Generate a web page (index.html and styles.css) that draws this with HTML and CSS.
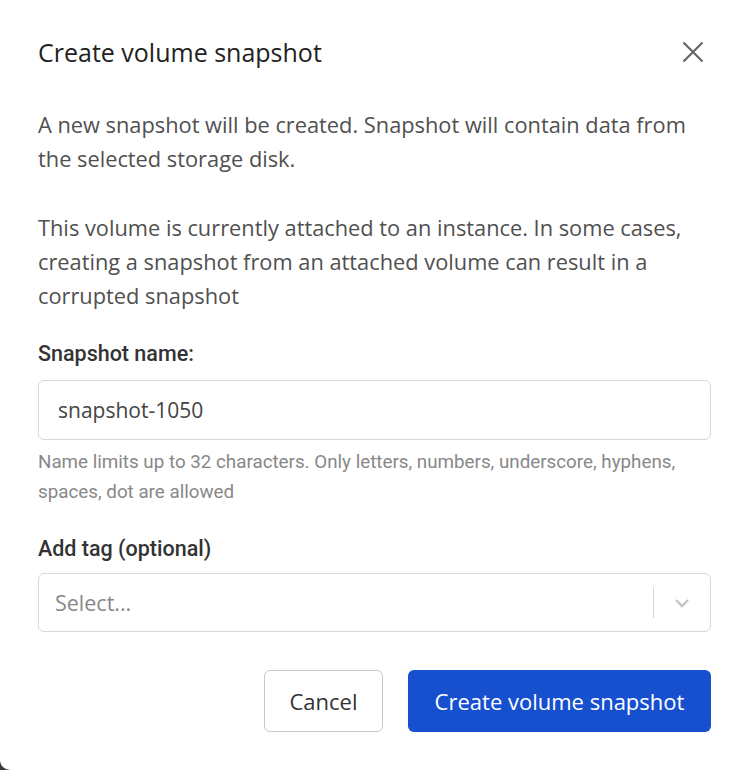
FILE: index.html
```html
<!DOCTYPE html>
<html lang="en">
<head>
    <meta charset="UTF-8">
    <meta name="viewport" content="width=device-width, initial-scale=1.0">
    <title>Create volume snapshot</title>
    <link rel="stylesheet" href="styles.css">
</head>
<body>
    <div class="modal">
        <div class="modal-header">
            <h1>Create volume snapshot</h1>
            <button class="close-btn" aria-label="Close">
                <svg width="22" height="22" viewBox="0 0 22 22">
                    <path d="M1.5 1.5 L20.5 20.5 M20.5 1.5 L1.5 20.5" stroke="#666" stroke-width="2.2" fill="none"/>
                </svg>
            </button>
        </div>

        <p class="text">A new snapshot will be created. Snapshot will contain data from the selected storage disk.</p>
        <p class="text">This volume is currently attached to an instance. In some cases, creating a snapshot from an attached volume can result in a corrupted snapshot</p>

        <label class="field-label" for="snapName">Snapshot name:</label>
        <input type="text" id="snapName" class="text-input" value="snapshot-1050" />
        <div class="hint">Name limits up to 32 characters. Only letters, numbers, underscore, hyphens, spaces, dot are allowed</div>

        <label class="field-label tag-label">Add tag (optional)</label>
        <div class="select">
            <span class="placeholder">Select...</span>
            <span class="select-sep"></span>
            <span class="select-arrow">
                <svg width="18" height="18" viewBox="0 0 18 18">
                    <path d="M3 6 L9 12 L15 6" stroke="#c4c4c4" stroke-width="2.4" fill="none"/>
                </svg>
            </span>
        </div>

        <div class="actions">
            <button class="btn btn-cancel">Cancel</button>
            <button class="btn btn-primary">Create volume snapshot</button>
        </div>
    </div>
</body>
</html>
```

FILE: styles.css
```css
body {
    margin: 0;
    padding: 0;
    background: #3a3a3a;
    font-family: "Open Sans", Arial, sans-serif;
}

.modal {
    box-sizing: border-box;
    width: 744px;
    height: 770px;
    background: white;
    border-bottom-left-radius: 10px;
    padding: 30px 33px 0 38px;
}

.modal-header {
    display: flex;
    justify-content: space-between;
    align-items: center;
    height: 44px;
}

h1 {
    margin: 0;
    font-size: 25px;
    font-weight: 500;
    color: #222;
}

.close-btn {
    border: none;
    background: none;
    padding: 0;
    margin-right: 7px;
    width: 22px;
    height: 22px;
    cursor: pointer;
}

.text {
    margin: 34px 0 0;
    font-size: 21.8px;
    line-height: 34px;
    color: #505050;
}

.text + .text {
    margin-top: 35px;
}

.field-label {
    display: block;
    margin-top: 28px;
    font-family: Roboto, sans-serif;
    font-size: 21.5px;
    font-weight: 500;
    color: #333;
    line-height: 26px;
}

.text-input {
    display: block;
    box-sizing: border-box;
    width: 100%;
    height: 60px;
    margin-top: 13px;
    padding: 0 19px;
    border: 1px solid #d8d8d8;
    border-radius: 6px;
    font-family: "Open Sans", sans-serif;
    font-size: 21px;
    color: #444;
}

.hint {
    margin-top: 7px;
    font-family: Roboto, sans-serif;
    font-size: 18.8px;
    line-height: 30px;
    color: #888;
}

.tag-label {
    margin-top: 29px;
}

.select {
    display: flex;
    align-items: center;
    box-sizing: border-box;
    height: 59px;
    margin-top: 11px;
    border: 1px solid #d8d8d8;
    border-radius: 6px;
    padding-left: 16px;
}

.placeholder {
    flex: 1;
    font-size: 21.5px;
    color: #888;
}

.select-sep {
    width: 1px;
    height: 31px;
    background: #d8d8d8;
}

.select-arrow {
    display: flex;
    align-items: center;
    justify-content: center;
    width: 56px;
}

.actions {
    display: flex;
    justify-content: flex-end;
    gap: 25px;
    margin-top: 38px;
}

.btn {
    height: 62px;
    border-radius: 6px;
    font-family: "Open Sans", sans-serif;
    font-size: 22px;
    cursor: pointer;
}

.btn-cancel {
    width: 119px;
    background: white;
    border: 1px solid #c8c8c8;
    color: #333;
}

.btn-primary {
    width: 303px;
    background: #1650cf;
    border: none;
    color: white;
}
```
